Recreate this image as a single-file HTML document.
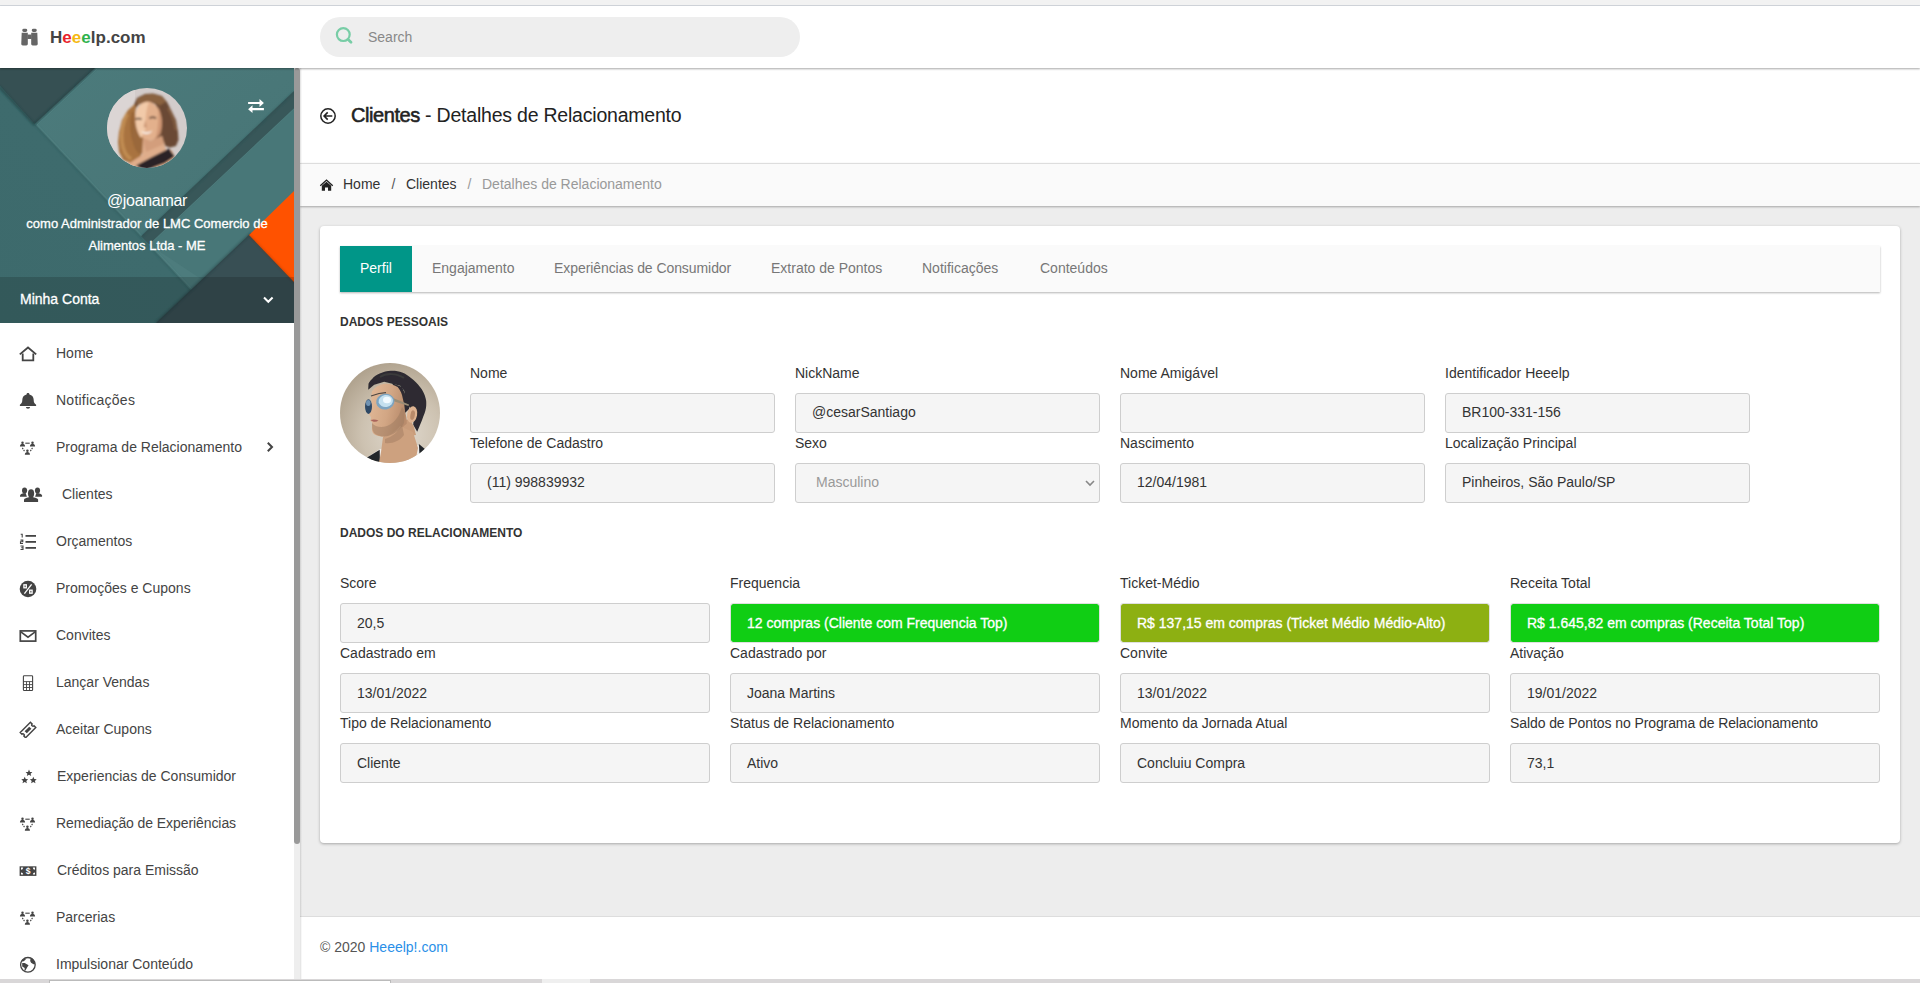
<!DOCTYPE html>
<html lang="pt-BR">
<head>
<meta charset="utf-8">
<title>Heeelp.com - Clientes - Detalhes de Relacionamento</title>
<style>
*{box-sizing:border-box;margin:0;padding:0}
html,body{width:1920px;height:983px;overflow:hidden}
body{position:relative;background:#ededed;font-family:"Liberation Sans",Arial,sans-serif;font-size:14px;color:#333}
.abs{position:absolute}
.t{position:absolute;white-space:nowrap;line-height:20px;height:20px}
#topstrip{left:0;top:0;width:1920px;height:6px;background:#f2f2f2;border-bottom:1px solid #d3d8de}
#header{left:0;top:6px;width:1920px;height:62px;background:#fff;box-shadow:0 1px 2px rgba(0,0,0,.35);z-index:5}
#search{left:320px;top:11px;width:480px;height:40px;border-radius:20px;background:#eeeeee}
#sidebar{left:0;top:68px;width:294px;height:915px;background:#fff}
#sbtrack{z-index:3;left:294px;top:68px;width:6px;height:915px;background:#eeeeee}
#sbthumb{z-index:3;left:294px;top:68px;width:6px;height:776px;background:#999;border-radius:3px}
#userpanel{left:0;top:68px;width:294px;height:255px;overflow:hidden;background:#4a7878}
.mi{position:absolute;left:56px;white-space:nowrap;line-height:20px;height:20px;color:#444;font-size:14px}
.ic{position:absolute;left:19px;width:18px;height:18px}
#main{left:300px;top:68px;width:1620px;height:915px;background:#ededed}
#pagehead{left:300px;top:68px;width:1620px;height:95px;background:#fff}
#crumb{left:300px;top:163px;width:1620px;height:43px;background:#fafafa;border-top:1px solid #ddd;box-shadow:0 1px 2px rgba(0,0,0,.3)}
#card{left:320px;top:226px;width:1580px;height:617px;background:#fff;border-radius:4px;box-shadow:0 1px 3px rgba(0,0,0,.3)}
#tabs{left:340px;top:246px;width:1540px;height:46px;background:#fafafa;box-shadow:0 1px 2px rgba(0,0,0,.3)}
#tabact{left:340px;top:246px;width:72px;height:46px;background:#009688}
.tab{position:absolute;top:258px;line-height:20px;height:20px;color:#777;font-size:14px;white-space:nowrap}
.lbl{position:absolute;white-space:nowrap;line-height:20px;height:20px;color:#333;font-size:14px}
.inp{position:absolute;height:40px;background:#f5f5f5;border:1px solid #cecece;border-radius:3px;padding:0 16px;line-height:37px;font-size:14px;color:#333;white-space:nowrap;overflow:hidden}
.w1{width:305px}
.w2{width:370px;padding-top:1px}
.grn{background:#10ce14;background-clip:padding-box;border-color:#e0e0e0;color:#fff;-webkit-text-stroke:0.3px #fff}
.olv{background:#8db012;background-clip:padding-box;border-color:#e0e0e0;color:#fff;-webkit-text-stroke:0.3px #fff}
.sec{position:absolute;left:340px;font-weight:bold;font-size:12px;line-height:16px;color:#333;white-space:nowrap}
#footer{left:300px;top:916px;width:1620px;height:63px;background:#fff;border-top:1px solid #ddd}
#botstrip{z-index:6;left:0;top:979px;width:1920px;height:4px;background:#d9d7d8}
#botbox{z-index:7;left:49px;top:980px;width:342px;height:3px;background:#fff;border:1px solid #bbb;border-bottom:0}
</style>
</head>
<body>
<div id="main" class="abs"></div>
<div id="sidebar" class="abs"></div>
<div id="sbtrack" class="abs"></div>
<div id="sbthumb" class="abs"></div>

<!-- USERPANEL -->
<div id="userpanel" class="abs">
<svg class="abs" style="left:0;top:0" width="294" height="255" viewBox="0 68 294 255">
  <defs>
    <linearGradient id="gA" x1="0" y1="0" x2="1" y2="1"><stop offset="0" stop-color="#4c7b7c"/><stop offset="1" stop-color="#467374"/></linearGradient>
    <linearGradient id="gB" x1="0" y1="1" x2="1" y2="0"><stop offset="0" stop-color="#3d6a6c"/><stop offset="0.5" stop-color="#3e6b6d"/><stop offset="1" stop-color="#3d6a6c"/></linearGradient>
    <linearGradient id="gC" x1="0" y1="1" x2="1" y2="0"><stop offset="0" stop-color="#45726f"/><stop offset="1" stop-color="#4f7e7f"/></linearGradient>
    <linearGradient id="gS" x1="0" y1="0" x2="1" y2="1"><stop offset="0" stop-color="#2f4a4c"/><stop offset="0.25" stop-color="#38585a"/><stop offset="1" stop-color="#3a5a5c"/></linearGradient>
    <clipPath id="avc"><circle cx="147" cy="128" r="40"/></clipPath>
    <filter id="bl1"><feGaussianBlur stdDeviation="1"/></filter>
    <filter id="bl2"><feGaussianBlur stdDeviation="0.8"/></filter>
  </defs>
  <rect x="0" y="68" width="294" height="255" fill="url(#gA)"/>
  <!-- region right of stripe -->
  <polygon points="294,109 294,323 150,323 150,246" fill="#487778"/>
  <!-- lower-left big region -->
  <polygon points="0,86 34.5,124 222,323 0,323" fill="url(#gB)"/>
  <!-- lighter band right of main diagonal (below stripe end) -->
  <polygon points="141,236 149,244.5 204,281 190.6,290" fill="#4d7c7d"/>
  <!-- main diagonal shading -->
  <path d="M0 88 L34.5 124 L222 323" stroke="#2a5354" stroke-width="1.600" fill="none" opacity=".5" filter="url(#bl2)"/>
  <path d="M37 124.500 L224 323" stroke="#5a8a8a" stroke-width="1.200" fill="none" opacity=".45"/>
  <!-- dark stripe -->
  <polygon points="294,91 294,108.3 149,244.5 141,236.2" fill="#385759"/>
  <path d="M294 92 L142 236.500" stroke="#27474a" stroke-width="1.200" opacity=".55" filter="url(#bl2)"/>
  <path d="M294 109 L150 244" stroke="#5a8989" stroke-width="1" opacity=".3"/>
  <!-- dark bottom right -->
  <polygon points="251,233 294,278 294,323 156,323" fill="#384f54"/>
  <path d="M251 233 L156 323" stroke="#24393b" stroke-width="2" opacity=".5" filter="url(#bl2)"/>
  <!-- orange -->
  <polygon points="294,191 249,235 294,282" fill="#ff5200"/>
  <path d="M249 235 L294 282" stroke="#7a2a08" stroke-width="1.6" opacity=".35" filter="url(#bl2)"/>
  <!-- dark triangle top-left -->
  <polygon points="0,68 95,68 34.5,124 0,86" fill="#365053"/>
  <path d="M-1 86.500 L34 124.500" stroke="#1f3a3c" stroke-width="2" opacity=".55" filter="url(#bl2)"/>
  <path d="M95 68 L34.5 124" stroke="#1f3a3c" stroke-width="2" opacity=".6" filter="url(#bl2)"/>
  <path d="M97 69 L37 125" stroke="#5c8c8c" stroke-width="1" opacity=".45"/>
  <!-- minha conta overlay -->
  <rect x="0" y="277" width="294" height="46" fill="#000" opacity=".16"/>
  <!-- avatar -->
  <g clip-path="url(#avc)">
    <rect x="107" y="88" width="80" height="80" fill="#d3cccb"/>
    <rect x="107" y="88" width="28" height="80" fill="#dbd5d4"/>
    <g filter="url(#bl1)">
      <path d="M133 107l4-9 8-4 8-.5 9 2.500 5 6 4 8 5 10 2 12 .5 8-2.500 6-6 1.500-5-1.500-2-8-1-13-2-13-5-8-7-2.500-8 1.500-4 5z" fill="#6b4a34"/>
      <path d="M137 99l8-4.500 8-.5 9 2.500 4 5-6 4-7-3.500-9 .5-7 3z" fill="#8a6240"/>
      <path d="M168 108c4 6 7 14 8 22" stroke="#8a6446" stroke-width="2.500" fill="none" opacity=".7"/>
      <path d="M135 104l-7 6-6 10-3 12-1 10 1 10 4 8 7 3 7-1 4-6v-8l-3-6-3-10-.5-12 1.500-12z" fill="#a9733f"/>
      <path d="M127 114c-4 8-6 18-5 28 1 8 4 14 9 17" stroke="#c99559" stroke-width="3.500" fill="none" opacity=".75"/>
      <path d="M133 112c-2 10-2 22 2 32" stroke="#8a5a30" stroke-width="2.500" fill="none" opacity=".6"/>
      <ellipse cx="141" cy="132" rx="9" ry="22" fill="#9a683a"/><ellipse cx="160" cy="126" rx="8" ry="20" fill="#6b4a34"/><path d="M128 164l14-9 1-17 7 3 12-5 4 14 6 0 3 8-7 10h-40z" fill="#dfad8b"/>
      <ellipse cx="148.500" cy="121" rx="13.200" ry="19.500" fill="#e3b08c" transform="rotate(-6 148.500 121)"/>
      <path d="M136 112c2-6 7-10 13-10-3 7-4 16-3 26l-5 10c-5-7-6-17-5-26z" fill="#f2caa9"/>
      <path d="M158 106c4 8 5 18 3 28l-6 6c3-10 4-22 3-34z" fill="#c98f6c" opacity=".7"/>
      <path d="M143 138l7 3 12-5 2 8-18 8z" fill="#cf9a78" opacity=".8"/>
      <path d="M136 165.500l16-8.500 17-8.500 5.500 8-9.500 6.500-12 4.500-8 3z" fill="#2a2426"/>
      <path d="M141 131c3.500 1.800 8 1.800 11.500-.800-1.500 4-9 5.500-11.500.800z" fill="#fbf4ee"/>
      <path d="M135.500 119.200c2-1 4-1 6 0M149.500 118.200c2-1.200 4.500-1.200 6.500 0" stroke="#4a3326" stroke-width="1.600" fill="none"/>
      <path d="M145.500 120l-2 7 3.500 1z" fill="#cd9876"/>
    </g>
  </g>
  <!-- swap icon -->
  <path d="M248.1 101.9h11.4v-2.900l4.400 3.950-4.400 3.950v-2.800h-11.400z" fill="#fff"/>
  <path d="M263.9 108h-11.400v-2.800l-4.400 3.950 4.400 3.950v-2.900h11.400z" fill="#fff"/>
  <!-- chevron -->
  <path d="M264 297.500l4.300 4.300 4.300-4.300" fill="none" stroke="#fff" stroke-width="2"/>
</svg>
<div class="t" style="left:0;width:294px;text-align:center;top:123px;font-size:16px;color:#fff;letter-spacing:-0.3px">@joanamar</div>
<div class="t" style="left:0;width:294px;text-align:center;top:146px;font-size:13px;color:#fff;-webkit-text-stroke:0.3px #fff">como Administrador de LMC Comercio de</div>
<div class="t" style="left:0;width:294px;text-align:center;top:168px;font-size:13px;color:#fff;-webkit-text-stroke:0.3px #fff">Alimentos Ltda - ME</div>
<div class="t" style="left:20px;top:221px;font-size:14px;color:#fff;-webkit-text-stroke:0.3px #fff">Minha Conta</div>
</div>

<!-- MENU -->
<svg class="ic" style="top:344px;width:18px" viewBox="0 0 18 18"><path d="M0.8 10.4L9 3.5l8.2 6.9" fill="none" stroke="#444" stroke-width="1.8"/><path d="M3.7 9.4v6.9h10.6V9.4" fill="none" stroke="#444" stroke-width="1.8"/></svg><div class="mi" style="left:56px;top:343px">Home</div>
<svg class="ic" style="top:391px;width:18px" viewBox="0 0 18 18"><g transform="translate(9 9.8) scale(1.16 1) translate(-9 -9)"><path d="M9 1.200c.7 0 1.200.5 1.200 1.100v.5c2.300.6 3.700 2.600 3.700 5.200 0 2.600.6 3.800 2.100 5v1.100H2v-1.100c1.500-1.200 2.100-2.400 2.100-5 0-2.600 1.400-4.600 3.700-5.200v-.5c0-.6.500-1.100 1.200-1.100z" fill="#444"/><path d="M7.200 15.100h3.600a1.800 1.800 0 0 1-3.600 0z" fill="#444"/></g></svg><div class="mi" style="left:56px;top:390px;letter-spacing:0.24px">Notificações</div>
<svg class="ic" style="top:439.3px;width:18px" viewBox="0 0 18 18"><g fill="#444"><circle cx="3.50" cy="3.65" r="1.25"/><path d="M0.95 7.50c0-1.900 1-2.700 2.550-2.700s2.550.8 2.550 2.700z"/><circle cx="13.50" cy="3.65" r="1.25"/><path d="M10.95 7.50c0-1.900 1-2.700 2.550-2.700s2.550.8 2.550 2.700z"/><circle cx="8.40" cy="11.85" r="1.25"/><path d="M5.85 15.70c0-1.900 1-2.700 2.550-2.700s2.550.8 2.550 2.700z"/></g><g stroke="#444" stroke-width="1.1" fill="none"><path d="M6.300 4.200h4.400"/><path d="M3.300 8.900l2.200 3.300" stroke-dasharray="1.500 0.900"/><path d="M13.500 8.900l-2.200 3.300" stroke-dasharray="1.500 0.900"/></g></svg><div class="mi" style="left:56px;top:437px">Programa de Relacionamento</div>
<svg class="ic" style="top:485px;width:24px" viewBox="0 0 24 18"><g fill="#444"><ellipse cx="5.55" cy="5.55" rx="2.55" ry="3.1"/><path d="M1 11.800v-1.300c0-1 2.200-1.900 3.600-2.200h2.200l1.100 3.500z"/><ellipse cx="18.500" cy="5.550" rx="2.550" ry="3.100"/><path d="M23.050 11.800v-1.300c0-1-2.200-1.900-3.600-2.200h-2.200l-1.100 3.500z"/><ellipse cx="12.050" cy="8.400" rx="3.600" ry="4.700" fill="#fff"/><ellipse cx="12.050" cy="8.400" rx="3.100" ry="4.250"/><path d="M5 16.950v-2.200c0-1.300 3.600-2.300 5.600-2.700h2.900c2 .4 5.600 1.400 5.600 2.700v2.200z"/></g></svg><div class="mi" style="left:62px;top:484px">Clientes</div>
<svg class="ic" style="top:532px;width:18px" viewBox="0 0 18 18"><g fill="none" stroke="#444" stroke-width="1.8"><path d="M6.500 3.900H17"/><path d="M6.500 9.900H17"/><path d="M6.500 15.900H17"/></g><g fill="none" stroke="#444" stroke-width="1.100"><path d="M1.700 2.300h1.500v3.300"/><path d="M1.500 8.100h2.300v1.700h-2.300v1.700h2.500"/><path d="M1.500 14h2.500v3.600h-2.500M2.200 15.800h1.800"/></g></svg><div class="mi" style="left:56px;top:531px">Orçamentos</div>
<svg class="ic" style="top:580.0px;margin-left:0.0px;width:18px" viewBox="0 0 18 18"><circle cx="9" cy="9" r="8.300" fill="#444"/><g fill="none" stroke="#fff" stroke-width="1.300"><path d="M12.600 4.400L5.400 13.600"/><rect x="4.900" y="4.800" width="2.400" height="3" /><rect x="10.700" y="10.200" width="2.400" height="3"/></g></svg><div class="mi" style="left:56px;top:578px">Promoções e Cupons</div>
<svg class="ic" style="top:626px;width:18px" viewBox="0 0 18 18"><rect x="1.3" y="4.9" width="15.4" height="10.2" fill="none" stroke="#444" stroke-width="1.700"/><path d="M1.5 5.6L9 11.2l7.5-5.6" fill="none" stroke="#444" stroke-width="1.600"/></svg><div class="mi" style="left:56px;top:625px">Convites</div>
<svg class="ic" style="top:674.0px;margin-left:0.0px;width:18px" viewBox="0 0 18 18"><rect x="4.400" y="1.700" width="9.200" height="14.800" rx=".8" fill="none" stroke="#444" stroke-width="1.100"/><g stroke="#444" stroke-width=".9" fill="none"><path d="M4.400 7.600h9.200M4.400 10.600h9.200M4.400 13.500h9.200M7.500 7.600v8.900M10.500 7.600v8.900"/></g></svg><div class="mi" style="left:56px;top:672px">Lançar Vendas</div>
<svg class="ic" style="top:720px;width:18px" viewBox="0 0 18 18"><g transform="translate(0 1) rotate(-45 9 9) translate(9 9) scale(0.9) translate(-9 -9)"><path d="M1 4.800h16v2.700a1.500 1.500 0 0 0 0 3v2.700H1v-2.700a1.500 1.500 0 0 0 0-3z" fill="none" stroke="#444" stroke-width="1.600"/><rect x="5.400" y="7.300" width="7.200" height="3.400" fill="#444"/></g></svg><div class="mi" style="left:56px;top:719px">Aceitar Cupons</div>
<svg class="ic" style="top:768.0px;margin-left:1.0px;width:18px" viewBox="0 0 18 18"><g fill="#444"><path id="st" d="M9 1.600l1 2.300 2.400.2-1.800 1.600.6 2.400L9 6.800 6.800 8.100l.6-2.400-1.800-1.600 2.400-.2z"/><use href="#st" x="-4.300" y="7.200"/><use href="#st" x="4.300" y="7.200"/></g></svg><div class="mi" style="left:57px;top:766px">Experiencias de Consumidor</div>
<svg class="ic" style="top:815.3px;width:18px" viewBox="0 0 18 18"><g fill="#444"><circle cx="3.50" cy="3.65" r="1.25"/><path d="M0.95 7.50c0-1.900 1-2.700 2.550-2.700s2.550.8 2.550 2.700z"/><circle cx="13.50" cy="3.65" r="1.25"/><path d="M10.95 7.50c0-1.900 1-2.700 2.550-2.700s2.550.8 2.550 2.700z"/><circle cx="8.40" cy="11.85" r="1.25"/><path d="M5.85 15.70c0-1.900 1-2.700 2.550-2.700s2.550.8 2.550 2.700z"/></g><g stroke="#444" stroke-width="1.1" fill="none"><path d="M6.300 4.200h4.400"/><path d="M3.300 8.900l2.200 3.300" stroke-dasharray="1.500 0.900"/><path d="M13.500 8.900l-2.200 3.300" stroke-dasharray="1.500 0.900"/></g></svg><div class="mi" style="left:56px;top:813px;letter-spacing:-0.080px">Remediação de Experiências</div>
<svg class="ic" style="top:862.3px;margin-left:0.3px;width:18px" viewBox="0 0 18 18"><rect x="0.600" y="4.300" width="16.800" height="9.600" fill="#444"/><g fill="#fff"><path d="M2 5.600h2.200a2.200 2.200 0 0 1-2.200 2.200z"/><path d="M16 5.600h-2.200a2.200 2.200 0 0 0 2.200 2.200z"/><path d="M2 12.600h2.200a2.200 2.200 0 0 0-2.200-2.200z"/><path d="M16 12.600h-2.200a2.200 2.200 0 0 1 2.200-2.200z"/></g><text x="9" y="12.200" font-family="Liberation Sans, sans-serif" font-size="8.500" font-weight="bold" fill="#fff" text-anchor="middle">$</text></svg><div class="mi" style="left:57px;top:860px">Créditos para Emissão</div>
<svg class="ic" style="top:909.3px;width:18px" viewBox="0 0 18 18"><g fill="#444"><circle cx="3.50" cy="3.65" r="1.25"/><path d="M0.95 7.50c0-1.900 1-2.700 2.550-2.700s2.550.8 2.550 2.700z"/><circle cx="13.50" cy="3.65" r="1.25"/><path d="M10.95 7.50c0-1.900 1-2.700 2.550-2.700s2.550.8 2.550 2.700z"/><circle cx="8.40" cy="11.85" r="1.25"/><path d="M5.85 15.70c0-1.900 1-2.700 2.550-2.700s2.550.8 2.550 2.700z"/></g><g stroke="#444" stroke-width="1.1" fill="none"><path d="M6.300 4.200h4.400"/><path d="M3.300 8.900l2.200 3.300" stroke-dasharray="1.500 0.900"/><path d="M13.500 8.900l-2.200 3.300" stroke-dasharray="1.500 0.900"/></g></svg><div class="mi" style="left:56px;top:907px">Parcerias</div>
<svg class="ic" style="top:955px;width:18px" viewBox="0 0 18 18"><circle cx="8.9" cy="9.8" r="7.3" fill="#fff" stroke="#444" stroke-width="1.3"/><g fill="#444"><path d="M2.600 5.100L6.300 3.200 6.900 4.200 4.800 6.300 2.600 6.600z"/><path d="M3.200 8.100L5.700 8.100 9.600 10.300 8.400 12.100 6.300 15.800 5.400 16.100 5.700 13 3.200 11.500z"/><path d="M11.500 3.500L13.300 3.200 15.800 6.600 16.100 9.300 14.500 9.300 12.100 7.800 11.200 6z"/></g></svg><div class="mi" style="left:56px;top:954px">Impulsionar Conteúdo</div>
<svg class="abs" style="left:264px;top:440px" width="12" height="14" viewBox="0 0 12 14"><path d="M3.800 2.800l4.200 4.200-4.200 4.200" fill="none" stroke="#444" stroke-width="2"/></svg>

<!-- PAGE -->
<div id="pagehead" class="abs"></div>
<div class="abs" style="left:300px;top:68px;width:2px;height:911px;background:linear-gradient(90deg,rgba(0,0,0,.13),rgba(0,0,0,0));z-index:4"></div>
<div id="crumb" class="abs"></div>
<svg class="abs" style="left:319px;top:107px" width="18" height="18" viewBox="0 0 18 18"><circle cx="9" cy="9" r="7.200" fill="none" stroke="#222" stroke-width="1.500"/><path d="M13.300 9H5.500M8.700 5.400L5.100 9l3.600 3.600" fill="none" stroke="#222" stroke-width="1.600"/></svg>
<div class="t" id="ptitle" style="left:351px;top:101px;font-size:19.500px;line-height:28px;height:28px;color:#222;letter-spacing:-0.215px"><b id="ptb" style="font-weight:normal;-webkit-text-stroke:0.55px #222;font-size:20px;letter-spacing:-0.42px">Clientes</b> - Detalhes de Relacionamento</div>
<svg class="abs" style="left:319px;top:178px" width="15" height="14" viewBox="0 0 15 14"><path d="M7.500 1.200L0.800 7.200l.9 1L7.500 3l5.800 5.200.9-1z" fill="#222"/><path d="M2.800 7.800L7.500 3.700l4.700 4.100v4.900H9V9.400H6v3.300H2.800z" fill="#222"/></svg>
<div class="t" style="left:343px;top:174px;color:#333">Home</div>
<div class="t" style="left:391.600px;top:174px;color:#555">/</div>
<div class="t" style="left:406px;top:174px;color:#333">Clientes</div>
<div class="t" style="left:467.600px;top:174px;color:#999">/</div>
<div class="t" style="left:482px;top:174px;color:#999">Detalhes de Relacionamento</div>
<div id="card" class="abs"></div>
<div id="tabs" class="abs"></div>
<div id="tabact" class="abs"></div>

<!-- FORM -->
<div class="tab" style="left:360px;color:#fff">Perfil</div>
<div class="tab" style="left:432px">Engajamento</div>
<div class="tab" style="left:554px;letter-spacing:-0.070px">Experiências de Consumidor</div>
<div class="tab" style="left:771px">Extrato de Pontos</div>
<div class="tab" style="left:922px">Notificações</div>
<div class="tab" style="left:1040px">Conteúdos</div>
<div class="sec" style="top:314px">DADOS PESSOAIS</div>
<div class="sec" style="top:525px">DADOS DO RELACIONAMENTO</div>
<svg class="abs" style="left:340px;top:363px" width="100" height="100" viewBox="0 0 100 100">
<defs><clipPath id="av2"><circle cx="50" cy="50" r="50"/></clipPath><filter id="b3"><feGaussianBlur stdDeviation="0.7"/></filter>
<radialGradient id="bg2" cx="0.62" cy="0.7" r="0.8"><stop offset="0" stop-color="#e0d9ce"/><stop offset="0.5" stop-color="#cdc2b1"/><stop offset="1" stop-color="#a99b86"/></radialGradient>
<linearGradient id="sk2" x1="0" y1="0" x2="1" y2="0.3"><stop offset="0" stop-color="#e3bb9a"/><stop offset="0.6" stop-color="#d2a684"/><stop offset="1" stop-color="#b98c6c"/></linearGradient></defs>
<g clip-path="url(#av2)"><rect width="100" height="100" fill="url(#bg2)"/>
<g filter="url(#b3)">
<path d="M40 86l-14 9-4 9h66l-3-14-7-8z" fill="#efece8"/>
<path d="M39.7 86.700L27 94.500 22 104h18z" fill="#24262c"/>
<path d="M78.900 81l6 5 5 16H80z" fill="#24262c"/>
<path d="M28.500 20.700c1-2 2-3.500 3.400-4.500 2-2.500 5-4.500 7.800-5.600 3.500-1.800 7.500-2.600 11.200-2.800 4-.2 8 .5 11.200 1.700 3.500 1.300 6.500 3.400 8.900 5.600 3.500 2.600 6.500 5.600 9 8.900 2.800 3.300 4.700 7.300 5.600 11.300.8 2.500.8 5.200.6 7.700-.3 3.500-1.300 7-2.800 10.200-1 3-2.200 6-3.400 8.800l-2.800 6.800-4-7 1-12-8-10-2-12-4-5-16-4-10 3-6 5z" fill="#2d2c31"/>
<path d="M40 14c6-4 16-4 24 1" stroke="#4a4846" stroke-width="2" fill="none" opacity=".5"/><path d="M52 20l10 4 8 18-1 4-4 4-3-1-3-14z" fill="#2d2c31"/><path d="M60 58l10-2 4 8 2 8-14 2z" fill="#c99c7a"/>
<path d="M31.900 28.500c1.800-2.500 3.500-4.300 5.600-5.500 2.500-1.300 5.200-2 7.800-2.300 4.500-.3 8.800 1 12.300 3.300 2 2.400 3.500 5 4.400 7.900.9 3.500 1.600 6.800 2.300 10.100l.8 6.700c1 4 2 8 1.600 12l-2.700 2.300c-3 4-7 7-11.500 9.500-3.500 1.300-7 1.700-10.600 1.300-3-.5-6-1.300-8-2.800-1.600-1.600-2.200-3.800-2-6 .2-2 .6-4 .2-6-.9-.4-1.600-1-1.600-2 .1-.9.600-1.700.4-2.600-.4-1.500-1.900-2.700-2.400-4.200 0-.8.700-1.500 1.200-2.200 1-1.600 1.700-3.300 2-5.100.2-3-.6-6-.3-9 .1-1.800.2-3.700.500-5.400z" fill="url(#sk2)"/>
<path d="M43 74c6-1 12-5 17-11l13 6 5 16-4 20H38l3-16z" fill="#cda17f"/>
<path d="M45 76c7-2 13-7 17-14l2 10c-4 6-12 9-19 8z" fill="#a57f62" opacity=".55"/>
<path d="M32 60c3 4 9 5 15 3 5-2 9-6 12-11l3-8 3 4-1 12c-3 6-9 11-16 13-5 1-11 0-14-3-2-3-2-6-2-10z" fill="#9c795f" opacity=".5"/>
<ellipse cx="72.200" cy="51.500" rx="5" ry="8.300" fill="#deb391" transform="rotate(10 72 51)"/>
<ellipse cx="72.800" cy="52" rx="2.200" ry="4.800" fill="#b88a6a" transform="rotate(10 72 51)"/>
<path d="M30.500 57c2.500-1 5.500-.8 8 .6-2.500 1.800-5.500 1.600-8-.6z" fill="#a9655c"/>
<path d="M53 35l16 6.500-.5 1.500L53 38z" fill="#9b8d76"/>
<path d="M31 33l8-2.500 7-.8" stroke="#4d4540" stroke-width="1.200" fill="none"/>
<ellipse cx="28.500" cy="43.600" rx="3.500" ry="7.300" fill="#2f4966"/>
<ellipse cx="28.300" cy="40" rx="2.300" ry="3" fill="#6f93b3"/>
<ellipse cx="45.300" cy="38.600" rx="9.200" ry="7.900" fill="#7ea4c0" transform="rotate(-10 45.300 38.600)"/>
<ellipse cx="45.800" cy="38" rx="7.200" ry="6" fill="#c4e0ef" transform="rotate(-10 45.800 38)"/>
<ellipse cx="47" cy="37" rx="4" ry="3.300" fill="#f1faff"/>
</g></g></svg>
<div class="lbl" style="left:470px;top:363px">Nome</div>
<div class="inp w1" style="left:470px;top:393px"></div>
<div class="lbl" style="left:795px;top:363px">NickName</div>
<div class="inp w1" style="left:795px;top:393px">@cesarSantiago</div>
<div class="lbl" style="left:1120px;top:363px">Nome Amigável</div>
<div class="inp w1" style="left:1120px;top:393px"></div>
<div class="lbl" style="left:1445px;top:363px">Identificador Heeelp</div>
<div class="inp w1" style="left:1445px;top:393px">BR100-331-156</div>
<div class="lbl" style="left:470px;top:433px">Telefone de Cadastro</div>
<div class="inp w1" style="left:470px;top:463px">(11) 998839932</div>
<div class="lbl" style="left:795px;top:433px">Sexo</div>
<div class="inp w1" style="left:795px;top:463px"><span style="color:#999;padding-left:4px">Masculino</span></div>
<div class="lbl" style="left:1120px;top:433px">Nascimento</div>
<div class="inp w1" style="left:1120px;top:463px">12/04/1981</div>
<div class="lbl" style="left:1445px;top:433px">Localização Principal</div>
<div class="inp w1" style="left:1445px;top:463px">Pinheiros, São Paulo/SP</div>
<svg class="abs" style="left:1084px;top:478px" width="12" height="10" viewBox="0 0 12 10"><path d="M2 3l4 4 4-4" fill="none" stroke="#888" stroke-width="1.600"/></svg>
<div class="lbl" style="left:340px;top:573px">Score</div>
<div class="inp w2 " style="left:340px;top:603px">20,5</div>
<div class="lbl" style="left:730px;top:573px">Frequencia</div>
<div class="inp w2 grn" style="left:730px;top:603px">12 compras (Cliente com Frequencia Top)</div>
<div class="lbl" style="left:1120px;top:573px">Ticket-Médio</div>
<div class="inp w2 olv" style="left:1120px;top:603px">R$ 137,15 em compras (Ticket Médio Médio-Alto)</div>
<div class="lbl" style="left:1510px;top:573px">Receita Total</div>
<div class="inp w2 grn" style="left:1510px;top:603px">R$ 1.645,82 em compras (Receita Total Top)</div>
<div class="lbl" style="left:340px;top:643px">Cadastrado em</div>
<div class="inp w2 " style="left:340px;top:673px">13/01/2022</div>
<div class="lbl" style="left:730px;top:643px">Cadastrado por</div>
<div class="inp w2 " style="left:730px;top:673px">Joana Martins</div>
<div class="lbl" style="left:1120px;top:643px">Convite</div>
<div class="inp w2 " style="left:1120px;top:673px">13/01/2022</div>
<div class="lbl" style="left:1510px;top:643px">Ativação</div>
<div class="inp w2 " style="left:1510px;top:673px">19/01/2022</div>
<div class="lbl" style="left:340px;top:713px">Tipo de Relacionamento</div>
<div class="inp w2 " style="left:340px;top:743px">Cliente</div>
<div class="lbl" style="left:730px;top:713px">Status de Relacionamento</div>
<div class="inp w2 " style="left:730px;top:743px">Ativo</div>
<div class="lbl" style="left:1120px;top:713px">Momento da Jornada Atual</div>
<div class="inp w2 " style="left:1120px;top:743px">Concluiu Compra</div>
<div class="lbl" style="left:1510px;top:713px;letter-spacing:-0.090px">Saldo de Pontos no Programa de Relacionamento</div>
<div class="inp w2 " style="left:1510px;top:743px">73,1</div>

<div id="footer" class="abs"><div class="t" style="left:20px;top:20px;color:#555">© 2020 <span style="color:#2a8fe8">Heeelp!.com</span></div></div>
<div id="topstrip" class="abs"></div>
<div id="header" class="abs">
  <svg class="abs" style="left:19.700px;top:21.500px" width="19" height="19" viewBox="0 0 18 18">
    <g fill="#666">
      <rect x="2.2" y="0.6" width="4.6" height="3.2" rx="1.4"/>
      <rect x="11.2" y="0.6" width="4.6" height="3.2" rx="1.4"/>
      <path d="M1.6 4.6h5.8v10.6a1.4 1.4 0 0 1-1.4 1.4H2.6a1.4 1.4 0 0 1-1.4-1.4z"/>
      <path d="M10.6 4.6h5.8l.4 10.6a1.4 1.4 0 0 1-1.4 1.4H12a1.4 1.4 0 0 1-1.4-1.4z"/>
      <rect x="7" y="6.2" width="4" height="4.2"/>
    </g>
  </svg>
  <div class="t" id="logo" style="left:50px;top:22px;font-weight:bold;font-size:17px;color:#444;letter-spacing:0.020px">H<span style="color:#e8232d">e</span><span style="color:#f5b912">e</span><span style="color:#2fb24c">e</span>lp.com</div>
  <div id="search" class="abs"></div>
  <svg class="abs" style="left:335px;top:20px" width="20" height="20" viewBox="0 0 20 20" fill="none" stroke="#78cda6" stroke-linecap="round"><circle cx="8.3" cy="8.6" r="6.4" stroke-width="2.2"/><path d="M13.400 13.700l2.600 2.600" stroke-width="2.800"/></svg>
  <div class="t" style="left:368px;top:21px;color:#888;font-size:14px">Search</div>
</div>
<div id="botstrip" class="abs"></div>
<div id="botbox" class="abs"></div>
<div class="abs" style="left:542px;top:979px;width:48px;height:4px;background:#efefef;z-index:7"></div>
</body>
</html>
